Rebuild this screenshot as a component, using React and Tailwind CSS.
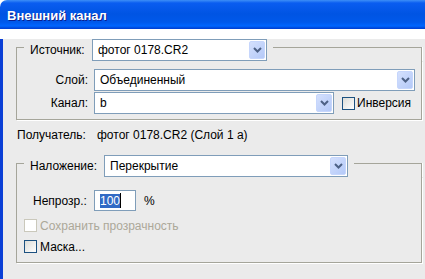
import React from 'react';

const line = 'border-[#a5a59a]';

function Chevron() {
  return (
    <svg width="9" height="6" viewBox="0 0 9 6" fill="none">
      <polyline points="1,1 4.5,4.5 8,1" stroke="#4d6185" strokeWidth="2" />
    </svg>
  );
}

function Combo({ value, className }) {
  return (
    <div className={`flex h-[22px] shrink-0 items-center border border-[#7f9db9] bg-white ${className}`}>
      <span className="flex-1 truncate pl-[5px] leading-[20px]">{value}</span>
      <div className="mr-[1px] flex h-[18px] w-[16px] items-center justify-center rounded-[2px] border border-[#c6d6fc] bg-[linear-gradient(135deg,#d4e0fd,#b4c9f8)]">
        <Chevron />
      </div>
    </div>
  );
}

function Check({ disabled }) {
  return (
    <div
      className={
        disabled
          ? 'h-[13px] w-[13px] shrink-0 border border-[#cac8bb] bg-white'
          : 'h-[13px] w-[13px] shrink-0 border border-[#1c5180] bg-[linear-gradient(135deg,#dcdcd7,#ffffff)]'
      }
    />
  );
}

export default function App() {
  return (
    <div className="h-[279px] w-[425px] overflow-hidden bg-white font-['Liberation_Sans',Arial,sans-serif] text-[12px] text-black">
      <div className="overflow-hidden rounded-tl-[7px]">
        {/* Title bar */}
        <div className="flex h-[29px] items-center bg-[linear-gradient(180deg,#3d8ff7_0px,#0a5df0_3px,#0054e3_14px,#0058ea_22px,#0066ff_26px,#0048d8_28px,#003dd7_29px)] pl-[7px] pt-[2px]">
          <span className="text-[13px] font-bold text-white [text-shadow:1px_1px_0_#0a1f8f]">Внешний канал</span>
        </div>

        {/* Body */}
        <div className="h-[250px] border-b-2 border-l-[3px] border-[#0a3fd6] bg-[#ebebeb]">
          {/* Source group */}
          <div className="ml-[13px] mt-[10px] w-[406px]">
            <div className="flex h-[22px]">
              <div className={`mt-[8px] w-[8px] border-l border-t ${line}`} />
              <div className="w-[68px] pl-[6px] leading-[22px]">Источник:</div>
              <Combo value="фотог 0178.CR2" className="w-[175px]" />
              <div className={`ml-[6px] mt-[8px] flex-1 border-r border-t ${line} shadow-[1px_0_0_#fff]`} />
            </div>
            <div className={`border-x border-b ${line} pb-[5px] pt-[8px] shadow-[1px_1px_0_#fff]`}>
              <div className="flex h-[22px] items-center">
                <div className="w-[71px] text-right">Слой:</div>
                <Combo value="Объединенный" className="ml-[6px] w-[321px]" />
              </div>
              <div className="mt-[1px] flex h-[22px] items-center">
                <div className="w-[71px] text-right">Канал:</div>
                <Combo value="b" className="ml-[6px] w-[240px]" />
                <div className="ml-[8px]">
                  <Check />
                </div>
                <span className="ml-[2px]">Инверсия</span>
              </div>
            </div>
          </div>

          {/* Target */}
          <div className="ml-[14px] mt-[8px] flex h-[14px] items-center leading-[14px]">
            <span className="w-[80px]">Получатель:</span>
            <span>фотог 0178.CR2 (Слой 1 а)</span>
          </div>

          {/* Blending group */}
          <div className="ml-[13px] mt-[13px] w-[406px]">
            <div className="flex h-[22px]">
              <div className={`mt-[8px] w-[8px] border-l border-t ${line}`} />
              <div className="w-[80px] pl-[6px] leading-[22px]">Наложение:</div>
              <Combo value="Перекрытие" className="w-[244px]" />
              <div className={`ml-[6px] mt-[8px] flex-1 border-r border-t ${line} shadow-[1px_0_0_#fff]`} />
            </div>
            <div className={`border-x border-b ${line} pb-[9px] pt-[13px] shadow-[1px_1px_0_#fff]`}>
              <div className="flex h-[21px] items-center">
                <div className="w-[77px] pl-[16px]">Непрозр.:</div>
                <div className="flex h-[21px] w-[42px] items-center border border-[#7f9db9] bg-white pl-[5px]">
                  <span className="bg-[#316ac5] leading-[14px] text-white">100</span>
                  <span className="h-[15px] w-[1px] bg-black" />
                </div>
                <span className="ml-[8px]">%</span>
              </div>
              <div className="mt-[8px] flex h-[13px] items-center pl-[7px]">
                <Check disabled />
                <span className="ml-[3px] text-[#aca899]">Сохранить прозрачность</span>
              </div>
              <div className="mt-[8px] flex h-[13px] items-center pl-[7px]">
                <Check />
                <span className="ml-[3px]">Маска...</span>
              </div>
            </div>
          </div>
        </div>
      </div>
    </div>
  );
}
